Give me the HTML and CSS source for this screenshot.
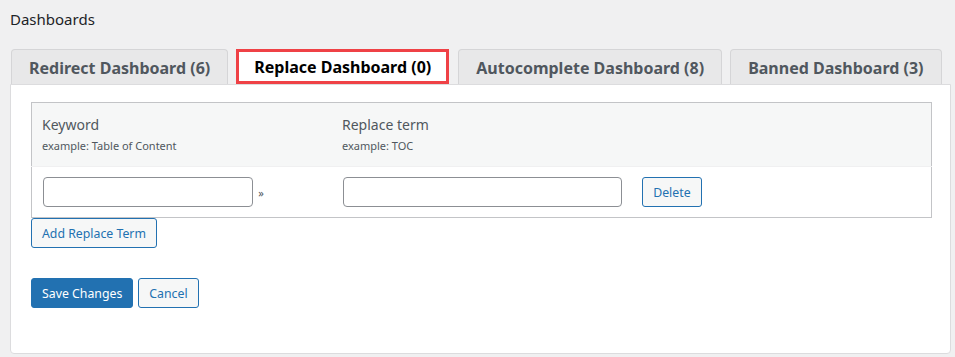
FILE: index.html
```html
<!DOCTYPE html>
<html lang="en">

<head>
    <meta charset="UTF-8" />
    <meta name="viewport" content="width=device-width, initial-scale=1.0" />
    <title>Dashboards</title>
    <link rel="stylesheet" href="styles.css">
</head>

<body>
    <h1 class="page-title">Dashboards</h1>

    <!-- Tabs -->
    <nav class="tabs">
        <a href="#" class="tab">Redirect Dashboard (6)</a>
        <a href="#" class="tab tab-active">Replace Dashboard (0)</a>
        <a href="#" class="tab">Autocomplete Dashboard (8)</a>
        <a href="#" class="tab">Banned Dashboard (3)</a>
    </nav>

    <!-- Replace panel -->
    <form class="panel">
        <table class="terms">
            <thead>
                <tr>
                    <th class="col-keyword">
                        <span class="th-label">Keyword</span>
                        <span class="th-hint">example: Table of Content</span>
                    </th>
                    <th>
                        <span class="th-label">Replace term</span>
                        <span class="th-hint">example: TOC</span>
                    </th>
                </tr>
            </thead>
            <tbody>
                <tr>
                    <td class="col-keyword">
                        <input type="text" class="field field-keyword" />
                        <span class="arrow">&raquo;</span>
                    </td>
                    <td>
                        <input type="text" class="field field-replace" />
                        <button type="button" class="btn btn-delete">Delete</button>
                    </td>
                </tr>
            </tbody>
        </table>

        <button type="button" class="btn">Add Replace Term</button>

        <div class="actions">
            <button type="submit" class="btn btn-primary">Save Changes</button>
            <button type="button" class="btn">Cancel</button>
        </div>
    </form>
</body>

</html>
```

FILE: styles.css
```css
body {
    font-family: "Noto Sans", "Open Sans", sans-serif;
    background-color: #f0f0f1;
    color: #3c434a;
    margin: 0;
    padding: 0 4px 0 10px;
}

.page-title {
    font-size: 15px;
    font-weight: 400;
    color: #1d2327;
    margin: 0;
    padding-top: 8px;
    line-height: 22px;
}

.tabs {
    display: flex;
    gap: 8px;
    margin-top: 19px;
    padding-left: 1px;
}

.tab {
    display: block;
    padding: 0 17px;
    height: 34px;
    line-height: 36px;
    font-size: 16px;
    font-weight: 700;
    color: #50575e;
    text-decoration: none;
    background-color: #e8e8e9;
    border: 1px solid #d5d5d7;
    border-bottom: none;
    border-radius: 4px 4px 0 0;
    white-space: nowrap;
}

.tab-active {
    background-color: #fff;
    color: #000;
    border: 3px solid #ef4146;
    height: 29px;
    line-height: 31px;
    padding: 0 15px;
    border-radius: 0;
    margin-right: 1px;
}

.panel {
    background-color: #fff;
    border: 1px solid #dcdcde;
    border-radius: 0 0 4px 4px;
    padding: 17px 18px 45px 20px;
}

.terms {
    width: 100%;
    border-collapse: collapse;
    border: 1px solid #c3c4c7;
}

.terms thead th {
    background-color: #f6f7f7;
    text-align: left;
    font-weight: 400;
    vertical-align: top;
    padding: 12px 10px 10px;
    border-bottom: 1px solid #f0f0f1;
}

.col-keyword {
    width: 278px;
}

.th-label {
    display: block;
    font-size: 14px;
    line-height: 20px;
    color: #50575e;
}

.th-hint {
    display: block;
    margin-top: 1px;
    font-size: 11px;
    line-height: 20px;
    color: #50575e;
}

.terms tbody td {
    padding: 10px 11px 10px;
    vertical-align: middle;
}

.field {
    box-sizing: border-box;
    height: 30px;
    border: 1px solid #8c8f94;
    border-radius: 4px;
    padding: 0 8px;
    font-size: 14px;
    vertical-align: middle;
}

.field-keyword {
    width: 210px;
}

.field-replace {
    width: 279px;
}

.arrow {
    font-size: 11px;
    color: #50575e;
    margin-left: 1px;
    vertical-align: middle;
}

.btn {
    box-sizing: border-box;
    height: 30px;
    padding: 0 10px;
    font-family: inherit;
    font-size: 12.3px;
    color: #2271b1;
    background-color: #f6f7f7;
    border: 1px solid #2271b1;
    border-radius: 3px;
    cursor: pointer;
    vertical-align: middle;
}

.btn-delete {
    margin-left: 16px;
}

.btn-primary {
    background-color: #2271b1;
    color: #fff;
}

.actions {
    display: flex;
    gap: 5px;
    margin-top: 30px;
}
```
